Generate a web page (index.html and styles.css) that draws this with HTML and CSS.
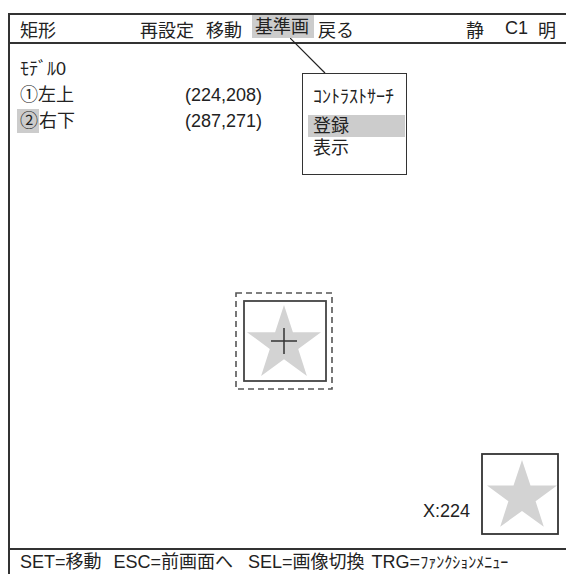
FILE: index.html
```html
<!DOCTYPE html>
<html lang="ja">
  <head>
    <meta charset="UTF-8" />
    <meta name="viewport" content="width=device-width, initial-scale=1.0" />
    <title>矩形</title>
    <link rel="stylesheet" href="styles.css">
  </head>
  <body>
    <div class="screen">
      <div class="menubar">
        <span class="title">矩形</span>
        <span class="item">再設定</span>
        <span class="item">移動</span>
        <span class="item active">基準画</span>
        <span class="item">戻る</span>
        <span class="status still">静</span>
        <span class="status">C1</span>
        <span class="status">明</span>
      </div>

      <div class="view">
        <div class="model">
          <div class="model-name">ﾓﾃﾞﾙ0</div>
          <div class="point">
            <span class="point-label"><span class="num">①</span>左上</span>
            <span class="point-xy">(224,208)</span>
          </div>
          <div class="point">
            <span class="point-label"><span class="num selected">②</span>右下</span>
            <span class="point-xy">(287,271)</span>
          </div>
        </div>

        <!-- leader line from 基準画 to the popup -->
        <svg class="leader" width="40" height="40" viewBox="0 0 40 40">
          <line x1="0" y1="0" x2="35" y2="35" stroke="#222" stroke-width="1.2" />
        </svg>

        <div class="popup">
          <div class="popup-title">ｺﾝﾄﾗｽﾄｻｰﾁ</div>
          <div class="popup-row selected">登録</div>
          <div class="popup-row">表示</div>
        </div>

        <svg class="target" width="99" height="99" viewBox="0 0 99 99">
          <rect x="1" y="1" width="96" height="96" fill="none" stroke="#555" stroke-width="1.6" stroke-dasharray="6 4" />
          <rect x="9" y="9" width="82" height="80" fill="#fff" stroke="#444" stroke-width="1.8" />
          <polygon fill="#d3d3d3" points="49,13 57.9,40.2 86,40.2 63.2,56.9 71.9,84 49,67.3 26.1,84 34.8,56.9 12,40.2 40.1,40.2" />
          <line x1="36" y1="49" x2="62" y2="49" stroke="#333" stroke-width="1.5" />
          <line x1="49" y1="36" x2="49" y2="62" stroke="#333" stroke-width="1.5" />
        </svg>

        <div class="thumb-group">
          <span class="thumb-label">X:224</span>
          <svg class="thumb" width="78" height="82" viewBox="0 0 78 82">
            <rect x="1" y="1" width="76" height="80" fill="#fff" stroke="#333" stroke-width="1.8" />
            <polygon fill="#d3d3d3" points="41,7 49.5,32.5 76,32.5 54.6,48.3 62.8,73.7 41,58 19.2,73.7 27.4,48.3 6,32.5 32.5,32.5" />
          </svg>
        </div>
      </div>

      <div class="keys">
        <span class="key">SET=移動</span>
        <span class="key">ESC=前画面へ</span>
        <span class="key">SEL=画像切換</span>
        <span class="key">TRG=<span class="small">ﾌｧﾝｸｼｮﾝﾒﾆｭｰ</span></span>
      </div>
    </div>
  </body>
</html>
```

FILE: styles.css
```css
html,
body {
  margin: 0;
  overflow: hidden;
  background: #fff;
}
body {
  font-family: "Liberation Sans", "Noto Sans CJK JP", sans-serif;
  font-size: 18px;
  color: #222;
}
.screen {
  margin: 13px 0 0 8px;
  border-left: 2px solid #333;
  border-top: 2px solid #333;
}
.menubar {
  display: flex;
  align-items: center;
  height: 27px;
  border-bottom: 2px solid #333;
  padding-left: 10px;
  white-space: nowrap;
}
.title {
  width: 120px;
}
.item {
  margin-right: 12px;
}
.item.active {
  align-self: flex-start;
  background-color: #cccccc;
  margin-left: -2px;
  margin-right: 4px;
  padding: 2px 5px 0 3px;
  line-height: 21px;
}
.status.still {
  margin-left: 100px;
  margin-right: 21px;
}
.status {
  margin-right: 10px;
}
.small {
  font-size: 16px;
}
.view {
  position: relative;
  height: 504px;
}
.model {
  padding: 12px 0 0 10px;
  line-height: 26px;
}
.point {
  display: flex;
}
.point-label {
  width: 165px;
}
.num {
  display: inline-block;
  line-height: 24px;
}
.num.selected {
  background-color: #cccccc;
  margin-left: -3px;
  padding: 0 1px 0 3px;
}
.leader {
  position: absolute;
  left: 280px;
  top: -6px;
}
.popup {
  position: absolute;
  left: 292px;
  top: 29px;
  box-sizing: border-box;
  width: 105px;
  height: 102px;
  border: 1px solid #333;
  background: #fff;
  padding-top: 14px;
}
.popup-title {
  padding-left: 10px;
  line-height: 18px;
  margin-bottom: 9px;
}
.popup-row {
  margin: 0 1px 0 5px;
  padding-left: 5px;
  line-height: 22px;
}
.popup-row.selected {
  background-color: #cccccc;
}
.target {
  position: absolute;
  left: 225px;
  top: 248px;
}
.thumb-group {
  position: absolute;
  left: 413px;
  top: 409px;
  display: flex;
  align-items: flex-end;
  gap: 11px;
}
.thumb-label {
  padding-bottom: 13px;
}
.thumb {
  display: block;
}
.keys {
  display: flex;
  border-top: 2px solid #333;
  padding: 2px 0 0 10px;
  line-height: 20px;
  height: 22px;
  white-space: nowrap;
}
.key:nth-child(2) {
  margin-left: 12px;
}
.key:nth-child(3) {
  margin-left: 15px;
}
.key:nth-child(4) {
  margin-left: 7px;
}
```
